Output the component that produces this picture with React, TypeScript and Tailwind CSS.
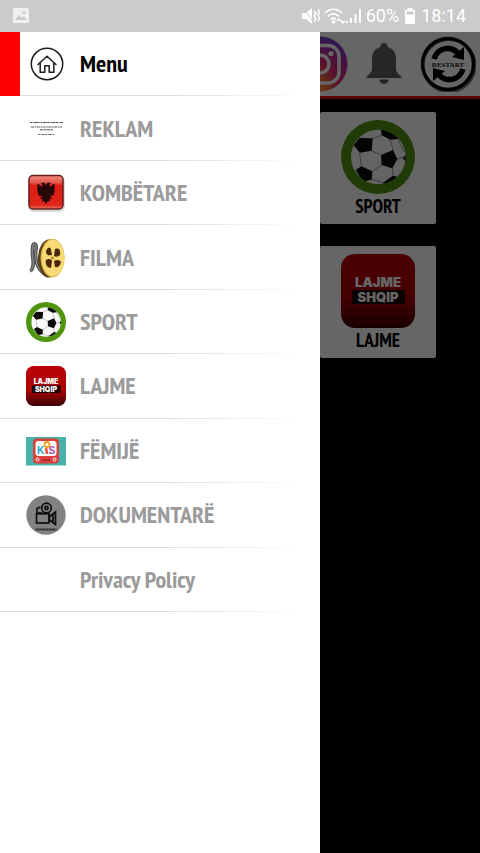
import type { ReactNode } from "react";

const HomeIcon = () => (
    <svg viewBox="0 0 34 34" className="size-[34px]" fill="none" stroke="#1c1c1c" aria-hidden="true">
        <circle cx="17" cy="17" r="15.7" strokeWidth="1.5" />
        <path
            d="M8 17.5 17 9.2l9 8.3M10.2 16v9.2h4.6v-6.4h4.4v6.4h4.6V16"
            strokeWidth="1.5"
            strokeLinejoin="round"
            strokeLinecap="round"
        />
    </svg>
);

const AdIcon = () => (
    <svg viewBox="0 0 40 40" className="size-10" stroke="#222" fill="none" aria-hidden="true">
        <path d="M4 13.5h33" strokeWidth="1" strokeDasharray="2 .6 1 .5 4 .5" opacity=".8" />
        <path d="M5 18h31" strokeWidth="1" strokeDasharray="3 .7 1.5 .6" opacity=".75" />
        <path d="M14 20.8h13" strokeWidth="1" strokeDasharray="3 .6" opacity=".8" />
        <path d="M12 25.5h17" strokeWidth="1" strokeDasharray="2 .7 4 .5" opacity=".6" />
    </svg>
);

const FlagIcon = () => (
    <svg viewBox="0 0 40 40" className="size-10" aria-hidden="true">
        <defs>
            <linearGradient id="flag" x1="0" y1="0" x2="0" y2="1">
                <stop offset="0" stopColor="#f08a80" />
                <stop offset=".22" stopColor="#e4564c" />
                <stop offset=".3" stopColor="#df1c12" />
                <stop offset=".88" stopColor="#e0251a" />
                <stop offset="1" stopColor="#f07468" />
            </linearGradient>
        </defs>
        <rect x="2" y="3" width="37" height="36" rx="5" fill="#999" opacity=".35" />
        <rect x="3" y="2.5" width="34" height="33.5" rx="4" fill="url(#flag)" stroke="#61201c" strokeWidth="1.5" />
        <path
            d="m20 12-1.5-2.5-3.5.5 1.5 2-.5 2-4-3.5-.8 1.5.5 2.5-.7.5.8 2.5-.6.5 1 2.5-.4.5 1.7 2 2.5-.5-2 3.5 2.5-.5-.5 3 2-.5L20 31l2-3 2 .5-.5-3 2.5.5-2-3.5 2.5.5 1.7-2-.4-.5 1-2.5-.6-.5.8-2.5-.7-.5.5-2.5L28 10.5 24 14l-.5-2 1.5-2-3.5-.5Z"
            fill="#260808"
        />
    </svg>
);

const FilmIcon = () => (
    <svg viewBox="0 0 40 40" className="size-10" aria-hidden="true">
        <path d="M4 33c7-3 0-18 3-26 2-3 4 0 3 5-1 8 0 20 12 26" fill="none" stroke="#555" strokeWidth="3.5" />
        <path d="M4 33c7-3 0-18 3-26 2-3 4 0 3 5-1 8 0 20 12 26" fill="none" stroke="#868686" strokeWidth="1.2" />
        <ellipse cx="23" cy="20.5" rx="11" ry="19" fill="#574019" />
        <ellipse cx="26.5" cy="20" rx="12" ry="19.3" fill="#d3ad43" />
        <ellipse cx="27" cy="20" rx="11.3" ry="18.5" fill="#f7da73" />
        <g fill="#4c250d">
            <path d="M20 13c2-5 5-4 5-1l1 5c-4 1-6 0-6-4Z" />
            <path d="M29 11c4-2 6 2 5 6-2 2-4 2-6 1Z" />
            <path d="M20 22c3-2 5-1 6 1l-1 7c-4 0-6-4-5-8Z" />
            <path d="M28 23c3-2 6-1 7 1-1 4-3 6-6 5Z" />
        </g>
        <circle cx="26.5" cy="20" r="1.5" fill="#b58c31" />
    </svg>
);

const BallIcon = ({ id, className }: { id: string; className: string }) => (
    <svg viewBox="0 0 222 222" className={className} aria-hidden="true">
        <defs>
            <clipPath id={id}>
                <circle cx="112" cy="111" r="82" />
            </clipPath>
        </defs>
        <circle cx="111" cy="111" r="111" fill="#509510" />
        <circle cx="112" cy="111" r="82" fill="#fafafa" />
        <g clipPath={`url(#${id})`}>
            <path
                d="m94 56 28-10M148 59l8 31M91 92l30 13M56 98l5 42M123 134l-29 20M154 144l2 24M168 117l20-5M170 56l20 40M91 178l37 10"
                stroke="#999"
                strokeWidth="3"
                fill="none"
            />
            <g fill="#0a0a0a">
                <path d="m38 76 18-22 39 1-3 37-36 6Z" />
                <path d="m120 105 36-15 13 27-15 28-32-10Z" />
                <path d="m44 150 17-11 33 15-2 25-26 6Z" />
                <path d="m118 20 42 5 12 32-24 2-26-13Z" />
                <path d="m124 190 32-23 20 5-8 30Z" />
                <path d="m186 114 14-18v40Z" />
            </g>
        </g>
    </svg>
);

const NewsIcon = ({ id, className }: { id: string; className: string }) => (
    <svg viewBox="0 0 74 74" className={className} aria-hidden="true">
        <defs>
            <linearGradient id={id} x1="0" y1="0" x2="0" y2="1">
                <stop offset="0" stopColor="#bb0206" />
                <stop offset=".6" stopColor="#ad0206" />
                <stop offset="1" stopColor="#3c0204" />
            </linearGradient>
        </defs>
        <rect width="74" height="74" rx="14" fill={`url(#${id})`} />
        <rect x="11" y="36" width="53" height="14" fill="#1c0506" />
        <g fill="#fff" fontFamily="Inter, 'Liberation Sans', sans-serif" fontWeight="900" fontSize="13" textAnchor="middle">
            <text x="37" y="33">LAJME</text>
            <text x="37" y="48">SHQIP</text>
        </g>
    </svg>
);

const KidsIcon = () => (
    <svg viewBox="0 0 40 40" className="size-10" aria-hidden="true">
        <rect y="6" width="40" height="28.5" fill="#45b3a9" />
        <rect x="7" y="7.5" width="26" height="25" rx="4" fill="#dc3f3c" />
        <rect x="9.5" y="10" width="21" height="15" rx="3" fill="#fff" />
        <g fontFamily="'Liberation Sans', Arial, sans-serif" fontWeight="700" fontSize="10">
            <text x="11" y="23" fill="#1ba0cf">K</text>
            <text x="22.5" y="23" fill="#b04aa6">S</text>
        </g>
        <circle cx="21" cy="13.5" r="2.5" fill="none" stroke="#f0a221" strokeWidth="1.8" />
        <path d="m20 17 1 6" stroke="#e7553c" strokeWidth="2.5" />
        <circle cx="11.5" cy="28.5" r="1.5" fill="#dc3f3c" stroke="#fff" strokeWidth="1" />
        <circle cx="28.5" cy="28.5" r="1.5" fill="#dc3f3c" stroke="#fff" strokeWidth="1" />
        <path d="M16 29h8" stroke="#b12a28" strokeWidth="2" />
    </svg>
);

const CameraIcon = () => (
    <svg viewBox="0 0 40 40" className="size-10" aria-hidden="true">
        <circle cx="20" cy="20" r="19.7" fill="#828282" />
        <g fill="none" stroke="#0d0d0d" strokeWidth="1.7">
            <rect x="10.5" y="18.8" width="12.5" height="9.2" />
            <path d="m23.5 21.5 6-4.5v12.5l-6-4.5ZM27 19v9" />
            <circle cx="20.5" cy="13" r="4.8" />
            <circle cx="20.5" cy="13" r="1.6" />
            <path d="M16.5 18H11v-4.5l3.5-1.5" />
        </g>
        <path d="M9.5 34.5h21" stroke="#333" strokeWidth="2" strokeDasharray="3 .3" />
    </svg>
);

const InstagramIcon = () => (
    <svg viewBox="0 0 56 56" className="size-14" aria-hidden="true">
        <defs>
            <radialGradient id="insta" cx=".28" cy="1.05" r="1.1">
                <stop offset="0" stopColor="#ffd65a" />
                <stop offset=".3" stopColor="#fb7a3a" />
                <stop offset=".55" stopColor="#e12f6c" />
                <stop offset=".78" stopColor="#b42da0" />
                <stop offset="1" stopColor="#6b45cc" />
            </radialGradient>
        </defs>
        <circle cx="28" cy="28" r="27.5" fill="url(#insta)" />
        <g fill="none" stroke="#fff" strokeWidth="3.5">
            <rect x="9.5" y="9.5" width="37.5" height="37.5" rx="11" />
            <circle cx="28" cy="28" r="9" />
        </g>
        <circle cx="39" cy="17.5" r="2.6" fill="#fff" />
    </svg>
);

const BellIcon = () => (
    <svg viewBox="0 0 36 42" className="h-[42px] w-9" fill="#606060" aria-hidden="true">
        <path d="M18 0a3.5 3.5 0 0 0-3.5 4C8.5 5.5 6 10.5 6 16v9c0 4-2 6-5.500 8.500V35h35v-1.500C32 31 30 29 30 25v-9c0-5.500-2.500-10.500-8.500-12A3.500 3.500 0 0 0 18 0Z" />
        <path d="M13.5 36.5h9c0 3-2 4.500-4.500 4.500s-4.500-1.500-4.500-4.500Z" />
    </svg>
);

const RestartIcon = () => (
    <svg viewBox="0 0 56 56" className="size-14" aria-hidden="true">
        <circle cx="29" cy="29.5" r="26" fill="none" stroke="#777" strokeWidth="3" />
        <circle cx="28" cy="28" r="25.5" fill="none" stroke="#000" strokeWidth="3.5" />
        <g fill="none" stroke="#000" strokeWidth="5.5">
            <path d="M14 23C18 11 31 9 39 18" />
            <path d="M43 33C39 45 26 47 18 38" />
        </g>
        <path d="M44 11v13l-12-3ZM13 45V32l12 3Z" fill="#000" />
        <text
            x="28"
            y="31"
            textAnchor="middle"
            fontFamily="'Liberation Serif', serif"
            fontWeight="700"
            fontSize="7"
            fill="#111"
        >
            RESTART
        </text>
    </svg>
);

const menuItems: { label: string; icon: ReactNode }[] = [
    { label: "REKLAM", icon: <AdIcon /> },
    { label: "KOMBËTARE", icon: <FlagIcon /> },
    { label: "FILMA", icon: <FilmIcon /> },
    { label: "SPORT", icon: <BallIcon id="ball-menu" className="size-10" /> },
    { label: "LAJME", icon: <NewsIcon id="news-menu" className="size-10" /> },
    { label: "FËMIJË", icon: <KidsIcon /> },
    { label: "DOKUMENTARË", icon: <CameraIcon /> },
    { label: "Privacy Policy", icon: null },
];

const RowLine = () => (
    <span className="absolute inset-x-0 bottom-0 h-px bg-linear-to-r from-[#dcdcdc] from-50% to-white to-95%" />
);

const StatusBar = () => (
    <div className="flex h-8 items-center justify-between bg-[#cbcbcb] pr-3.5 pl-3 font-['Roboto',sans-serif] text-lg text-white">
        <svg viewBox="0 0 18 18" className="size-[18px]" aria-hidden="true">
            <rect x="1" y="1" width="16" height="15" rx="1.5" fill="#f0f0f0" />
            <path d="m3 13 4-5 3 3 2-2 3 4Z" fill="#cbcbcb" />
            <circle cx="12" cy="5.5" r="1.5" fill="#cbcbcb" />
        </svg>
        <div className="flex items-center gap-1">
            <svg viewBox="0 0 18 18" className="size-[18px]" fill="#fff" aria-hidden="true">
                <path d="M0 6h4l6-5v16l-6-5H0Z" />
                <path d="m1 1 12 16" stroke="#cbcbcb" strokeWidth="1" />
                <path d="m12 4 2 2-2 3 2 3-2 3M16 2l1.5 3L16 8l1.5 3-1.5 3" fill="none" stroke="#fff" strokeWidth="1.5" />
            </svg>
            <svg viewBox="0 0 22 18" className="h-[18px] w-[22px]" fill="none" stroke="#fff" strokeWidth="1.7" aria-hidden="true">
                <path d="M1 6c5-5 12-5 17 0M4 9.5c3.5-3.5 7.5-3.5 11 0M7 12.5c1.5-1.5 3.5-1.5 5 0" />
                <path d="m9.5 14 1 1-1 1-1-1Z" fill="#fff" />
                <path d="m13 14 2-2 2 2M17 14l2 2 2-2" strokeWidth="1.5" />
            </svg>
            <svg viewBox="0 0 16 18" className="-ml-1 h-[18px] w-4" fill="#fff" aria-hidden="true">
                <path d="M0 14h2v2H0ZM4 11h2v5H4ZM8.500 7h2v9h-2ZM13 2h2v14h-2Z" />
            </svg>
            <span>60%</span>
            <svg viewBox="0 0 12 18" className="mx-px h-[18px] w-3" aria-hidden="true">
                <path d="M3.500 1h5v2H11v14H1V3h2.500Z" fill="#fff" />
                <path d="M2.500 4.500h7v3h-7Z" fill="#cbcbcb" />
            </svg>
            <span>18:14</span>
        </div>
    </div>
);

const ChannelCard = ({ label, children }: { label: string; children: ReactNode }) => (
    <button className="flex h-28 w-[116px] flex-col items-center gap-0.5 rounded-xs bg-white pt-2 text-[19px] leading-5 font-bold text-black">
        {children}
        {label}
    </button>
);

export default function App() {
    return (
        <div className="flex min-h-screen flex-col bg-black font-['PT_Sans_Narrow','Liberation_Sans_Narrow','Liberation_Sans',sans-serif]">
            <StatusBar />
            <div className="relative flex-1">
                <header className="flex h-[67px] justify-end border-b-3 border-[#e01010] bg-white">
                    <button aria-label="Instagram" className="flex w-16 items-center justify-center">
                        <InstagramIcon />
                    </button>
                    <button aria-label="Notifications" className="flex w-16 items-center justify-center">
                        <BellIcon />
                    </button>
                    <button aria-label="Restart" className="flex w-16 items-center justify-center">
                        <RestartIcon />
                    </button>
                </header>
                <main className="flex flex-col items-end gap-[22px] pt-[13px] pr-11">
                    <ChannelCard label="SPORT">
                        <BallIcon id="ball-card" className="size-[74px]" />
                    </ChannelCard>
                    <ChannelCard label="LAJME">
                        <NewsIcon id="news-card" className="size-[74px]" />
                    </ChannelCard>
                </main>

                <div className="absolute inset-0 bg-black/60">
                    <aside className="h-full w-2/3 bg-white">
                        <nav className="grid h-[580px] auto-rows-fr text-2xl font-bold text-[#9b9b9b]">
                            <button className="relative flex items-center border-l-20 border-[#ff0000] text-left text-black">
                                <span className="flex w-[60px] justify-center pr-[6px]">
                                    <HomeIcon />
                                </span>
                                Menu
                                <RowLine />
                            </button>
                            {menuItems.map(({ label, icon }) => (
                                <button key={label} className="relative flex items-center text-left">
                                    <span className="w-20 pl-[26px]">{icon}</span>
                                    {label}
                                    <RowLine />
                                </button>
                            ))}
                        </nav>
                    </aside>
                </div>
            </div>
        </div>
    );
}
